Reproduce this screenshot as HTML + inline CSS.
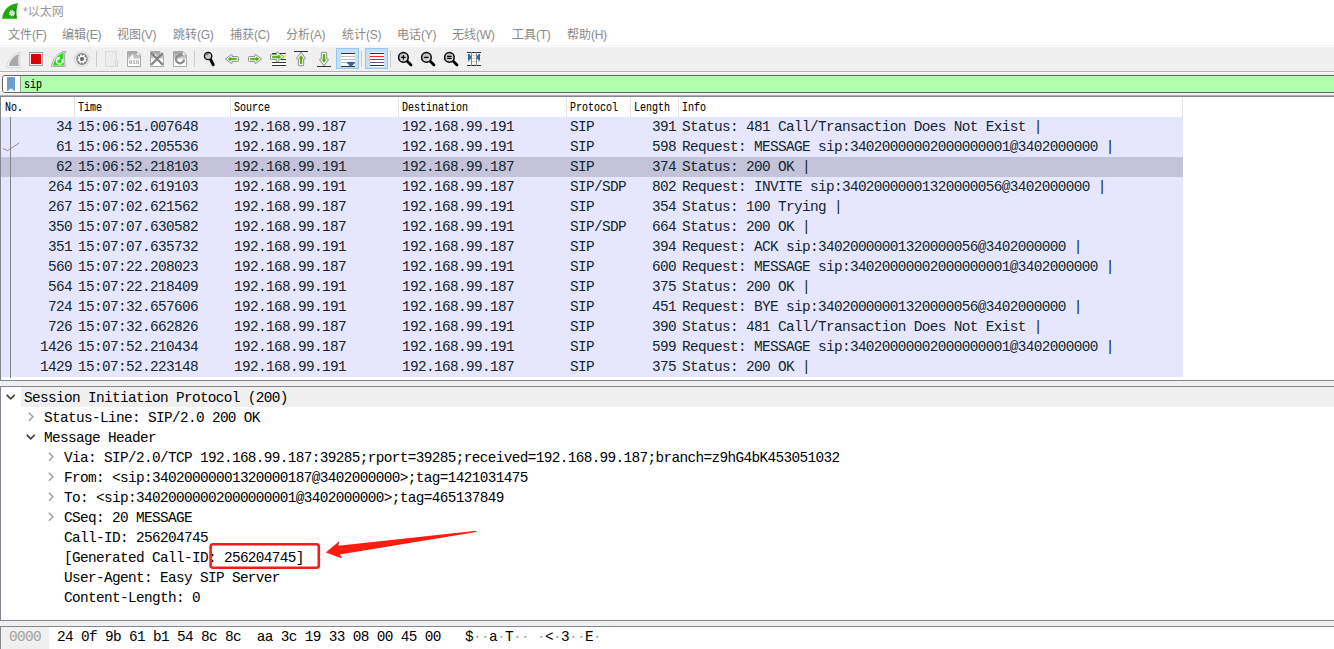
<!DOCTYPE html>
<html lang="zh-CN"><head><meta charset="utf-8"><title>*以太网</title>
<style>
html,body{margin:0;padding:0}
body{width:1334px;height:649px;position:relative;overflow:hidden;background:#fff;font-family:"Liberation Sans","Noto Sans CJK SC",sans-serif}
.a{position:absolute}
.t{position:absolute;white-space:pre}
#title{left:23px;top:3px;height:18px;line-height:18px;font-size:12px;color:#9a9a9a}
.ml{letter-spacing:-0.3px}
.m{position:absolute;top:26px;height:18px;line-height:18px;font-size:12px;color:#8a8a8a;white-space:pre}
#tbl{left:0;top:45px;width:1334px;height:1px;background:#f5f5f5}
#tb{left:0;top:47px;width:1334px;height:24px;background:#f0f0f0;border-bottom:1px solid #b2b2b2}
#fb{left:0;top:73px;width:1334px;height:22px;background:#f0f0f0;border-bottom:1px solid #b0b0b0}
#filter{left:2px;top:75px;width:1340px;height:16px;border:1px solid #646464;border-radius:3px;background:#fff;overflow:hidden}
#fg{left:18px;top:0;width:1330px;height:16px;background:#afffaf}
#bm{left:0;top:0;width:17px;height:16px;background:#fff;border-right:1px solid #9a9a9a}
#ftxt{left:21px;top:0px;height:16px;line-height:18px;font:12px/18px "Liberation Mono",monospace;color:#000;transform:scaleX(0.8332);transform-origin:0 50%;-webkit-text-stroke:0.1px #000}
#plist{left:0;top:96px;width:1334px;height:285px;border-top:1px solid #828790;border-left:1px solid #828790;border-bottom:1px solid #828790;box-sizing:border-box;background:#fff}
.h{position:absolute;top:99px;height:18px;line-height:18px;font:12px/18px "Liberation Mono",monospace;color:#000;white-space:pre;transform:scaleX(0.8332);transform-origin:0 50%;-webkit-text-stroke:0.1px #000}
.hs{position:absolute;top:97px;width:1px;height:20px;background:#e2e2e2}
.r{position:absolute;left:1px;width:1182px;height:20px;background:#e7e6ff;color:#12272e;font:14.4px/20px "Liberation Mono",monospace;letter-spacing:-0.6414px}
.r.sel{background:#c4c3d9}
.r span{position:absolute;top:0;height:20px;line-height:20px;white-space:pre}
.r .n{right:1111px}
.r .l{right:507px}
#split1{left:0;top:381px;width:1334px;height:5px;background:#f0f0f0}
#det{left:0;top:386px;width:1334px;height:235px;border-top:1px solid #828790;border-left:1px solid #828790;border-bottom:1px solid #828790;box-sizing:border-box;background:#fff}
.d{position:absolute;height:20px;line-height:20px;color:#000;font:14.4px/20px "Liberation Mono",monospace;letter-spacing:-0.6414px;white-space:pre}
.d span{position:relative;top:1px}
#split2{left:0;top:621px;width:1334px;height:5px;background:#f0f0f0}
#hex{left:0;top:626px;width:1334px;height:23px;border-top:1px solid #828790;border-left:1px solid #828790;box-sizing:border-box;background:#fff}
.x{position:absolute;top:627px;height:22px;line-height:22px;font:14.4px/22px "Liberation Mono",monospace;letter-spacing:-0.6414px;white-space:pre;color:#000}
.x span{position:relative;top:-1px}
.x i{font-style:normal;color:#a8a4ac}
svg{position:absolute;overflow:visible}
</style></head>
<body>
<!-- title bar -->
<div id="title" class="t">*以太网</div>
<!-- menu bar -->
<div class="m" style="left:8px">文件<span class="ml">(F)</span></div>
<div class="m" style="left:62px">编辑<span class="ml">(E)</span></div>
<div class="m" style="left:117px">视图<span class="ml">(V)</span></div>
<div class="m" style="left:173px">跳转<span class="ml">(G)</span></div>
<div class="m" style="left:230px">捕获<span class="ml">(C)</span></div>
<div class="m" style="left:286px">分析<span class="ml">(A)</span></div>
<div class="m" style="left:342px">统计<span class="ml">(S)</span></div>
<div class="m" style="left:397px">电话<span class="ml">(Y)</span></div>
<div class="m" style="left:452px">无线<span class="ml">(W)</span></div>
<div class="m" style="left:512px">工具<span class="ml">(T)</span></div>
<div class="m" style="left:567px">帮助<span class="ml">(H)</span></div>
<!-- toolbar -->
<div id="tbl" class="a"></div><div id="tb" class="a"></div>
<!-- filter -->
<div id="fb" class="a"></div><div id="filter" class="a"><div id="fg" class="a"></div><div id="bm" class="a"></div><div id="ftxt" class="t">sip</div></div>
<!-- packet list -->
<div id="plist" class="a"></div>
<div class="h" style="left:5px">No.</div>
<div class="h" style="left:78px">Time</div>
<div class="h" style="left:234px">Source</div>
<div class="h" style="left:402px">Destination</div>
<div class="h" style="left:570px">Protocol</div>
<div class="h" style="left:634px">Length</div>
<div class="h" style="left:682px">Info</div>
<div class="hs" style="left:74px"></div>
<div class="hs" style="left:230px"></div>
<div class="hs" style="left:398px"></div>
<div class="hs" style="left:566px"></div>
<div class="hs" style="left:630px"></div>
<div class="hs" style="left:678px"></div>
<div class="hs" style="left:1182px"></div>
<div class="r" style="top:117px"><span class="n">34</span><span style="left:77px">15:06:51.007648</span><span style="left:233px">192.168.99.187</span><span style="left:401px">192.168.99.191</span><span style="left:569px">SIP</span><span class="l">391</span><span style="left:681px">Status: 481 Call/Transaction Does Not Exist |</span></div>
<div class="r" style="top:137px"><span class="n">61</span><span style="left:77px">15:06:52.205536</span><span style="left:233px">192.168.99.187</span><span style="left:401px">192.168.99.191</span><span style="left:569px">SIP</span><span class="l">598</span><span style="left:681px">Request: MESSAGE sip:34020000002000000001@3402000000 |</span></div>
<div class="r sel" style="top:157px"><span class="n">62</span><span style="left:77px">15:06:52.218103</span><span style="left:233px">192.168.99.191</span><span style="left:401px">192.168.99.187</span><span style="left:569px">SIP</span><span class="l">374</span><span style="left:681px">Status: 200 OK |</span></div>
<div class="r" style="top:177px"><span class="n">264</span><span style="left:77px">15:07:02.619103</span><span style="left:233px">192.168.99.191</span><span style="left:401px">192.168.99.187</span><span style="left:569px">SIP/SDP</span><span class="l">802</span><span style="left:681px">Request: INVITE sip:34020000001320000056@3402000000 |</span></div>
<div class="r" style="top:197px"><span class="n">267</span><span style="left:77px">15:07:02.621562</span><span style="left:233px">192.168.99.187</span><span style="left:401px">192.168.99.191</span><span style="left:569px">SIP</span><span class="l">354</span><span style="left:681px">Status: 100 Trying |</span></div>
<div class="r" style="top:217px"><span class="n">350</span><span style="left:77px">15:07:07.630582</span><span style="left:233px">192.168.99.187</span><span style="left:401px">192.168.99.191</span><span style="left:569px">SIP/SDP</span><span class="l">664</span><span style="left:681px">Status: 200 OK |</span></div>
<div class="r" style="top:237px"><span class="n">351</span><span style="left:77px">15:07:07.635732</span><span style="left:233px">192.168.99.191</span><span style="left:401px">192.168.99.187</span><span style="left:569px">SIP</span><span class="l">394</span><span style="left:681px">Request: ACK sip:34020000001320000056@3402000000 |</span></div>
<div class="r" style="top:257px"><span class="n">560</span><span style="left:77px">15:07:22.208023</span><span style="left:233px">192.168.99.187</span><span style="left:401px">192.168.99.191</span><span style="left:569px">SIP</span><span class="l">600</span><span style="left:681px">Request: MESSAGE sip:34020000002000000001@3402000000 |</span></div>
<div class="r" style="top:277px"><span class="n">564</span><span style="left:77px">15:07:22.218409</span><span style="left:233px">192.168.99.191</span><span style="left:401px">192.168.99.187</span><span style="left:569px">SIP</span><span class="l">375</span><span style="left:681px">Status: 200 OK |</span></div>
<div class="r" style="top:297px"><span class="n">724</span><span style="left:77px">15:07:32.657606</span><span style="left:233px">192.168.99.191</span><span style="left:401px">192.168.99.187</span><span style="left:569px">SIP</span><span class="l">451</span><span style="left:681px">Request: BYE sip:34020000001320000056@3402000000 |</span></div>
<div class="r" style="top:317px"><span class="n">726</span><span style="left:77px">15:07:32.662826</span><span style="left:233px">192.168.99.187</span><span style="left:401px">192.168.99.191</span><span style="left:569px">SIP</span><span class="l">390</span><span style="left:681px">Status: 481 Call/Transaction Does Not Exist |</span></div>
<div class="r" style="top:337px"><span class="n">1426</span><span style="left:77px">15:07:52.210434</span><span style="left:233px">192.168.99.187</span><span style="left:401px">192.168.99.191</span><span style="left:569px">SIP</span><span class="l">599</span><span style="left:681px">Request: MESSAGE sip:34020000002000000001@3402000000 |</span></div>
<div class="r" style="top:357px"><span class="n">1429</span><span style="left:77px">15:07:52.223148</span><span style="left:233px">192.168.99.191</span><span style="left:401px">192.168.99.187</span><span style="left:569px">SIP</span><span class="l">375</span><span style="left:681px">Status: 200 OK |</span></div>
<div class="a" style="left:10px;top:117px;width:1px;height:261px;background:#7e868b"></div>
<div id="split1" class="a"></div>
<!-- details -->
<div id="det" class="a"></div>
<div class="a" style="left:21px;top:387px;width:1313px;height:20px;background:#f0f0f0"></div>
<div class="d" style="left:24px;top:387px"><span>Session Initiation Protocol (200)</span></div>
<div class="d" style="left:44px;top:407px"><span>Status-Line: SIP/2.0 200 OK</span></div>
<div class="d" style="left:44px;top:427px"><span>Message Header</span></div>
<div class="d" style="left:64px;top:447px"><span>Via: SIP/2.0/TCP 192.168.99.187:39285;rport=39285;received=192.168.99.187;branch=z9hG4bK453051032</span></div>
<div class="d" style="left:64px;top:467px"><span>From: &lt;sip:34020000001320000187@3402000000&gt;;tag=1421031475</span></div>
<div class="d" style="left:64px;top:487px"><span>To: &lt;sip:34020000002000000001@3402000000&gt;;tag=465137849</span></div>
<div class="d" style="left:64px;top:507px"><span>CSeq: 20 MESSAGE</span></div>
<div class="d" style="left:64px;top:527px"><span>Call-ID: 256204745</span></div>
<div class="d" style="left:64px;top:547px"><span>[Generated Call-ID: 256204745]</span></div>
<div class="d" style="left:64px;top:567px"><span>User-Agent: Easy SIP Server</span></div>
<div class="d" style="left:64px;top:587px"><span>Content-Length: 0</span></div>
<div id="split2" class="a"></div>
<!-- hex -->
<div id="hex" class="a"></div>
<div class="a" style="left:1px;top:627px;width:48px;height:22px;background:#f0f0f0"></div>
<div class="x" style="left:9px;color:#a0a0a0"><span>0000</span></div>
<div class="x" style="left:57px"><span>24 0f 9b 61 b1 54 8c 8c  aa 3c 19 33 08 00 45 00</span></div>
<div class="x" style="left:465px"><span>$<i>··</i>a<i>·</i>T<i>··</i> <i>·</i>&lt;<i>·</i>3<i>··</i>E<i>·</i></span></div>
<svg class="a" style="left:2px;top:3px" width="16" height="16" viewBox="0 0 16 16"><path d="M15.6,0.2 C8.6,0.6 0.8,6 0.1,15.9 H15 C13.8,10.5 14.2,5 15.9,0.8 Z" fill="#22a806"/><path d="M0.3,14.9 H14.8 L15,15.9 H0.1 Z" fill="#63c052"/><path d="M12,6 C11.6,9 11.9,12.6 12.6,14.9 H14.8 C14,10.5 14.2,6 15.2,2.5 Z" fill="#158403" opacity=".55"/><circle cx="9.9" cy="10.2" r="2.2" fill="#eaf6e7"/><circle cx="9.9" cy="10.2" r="2.6" fill="none" stroke="#eaf6e7" stroke-width="1.2" stroke-dasharray="1.1 0.94"/><circle cx="9.9" cy="10.2" r="0.7" fill="#86cb7b"/></svg>
<div class="a" style="left:336px;top:48px;width:21px;height:19px;background:#c5dff5;border:1px solid #92c9f7"></div>
<div class="a" style="left:365px;top:48px;width:21px;height:19px;background:#c5dff5;border:1px solid #92c9f7"></div>
<div class="a" style="left:96px;top:51px;width:1px;height:16px;background:#cdcdcd"></div>
<div class="a" style="left:194px;top:51px;width:1px;height:16px;background:#cdcdcd"></div>
<div class="a" style="left:361px;top:51px;width:1px;height:16px;background:#cdcdcd"></div>
<div class="a" style="left:390px;top:51px;width:1px;height:16px;background:#cdcdcd"></div>
<svg class="a" style="left:6px;top:52px" width="16" height="16" viewBox="0 0 16 16"><path d="M11.6,0.5 H15.7 M13.4,0.6 C7.4,1.6 1.6,7.4 0.4,15.4 H14.5 C13.4,10 13.4,5 14.3,0.6" fill="#f7f7f7" stroke="#d6d6d6" stroke-width="1"/><path d="M13,1.9 C8.2,3.2 4,7.6 2.8,13.9 H12.9 C12.1,10 12.2,5.6 13,1.9 Z" fill="#a9a9a9"/></svg>
<svg class="a" style="left:29px;top:52px" width="14" height="14" viewBox="0 0 14 14"><rect x="0.5" y="0.5" width="13" height="13" fill="#fbe3e3" stroke="#a0a4a6"/><rect x="2" y="2" width="10" height="10" rx="0.6" fill="#dc0000"/></svg>
<svg class="a" style="left:51px;top:51px" width="16" height="16" viewBox="0 0 16 16"><path d="M11,0.6 H15.6 M13.2,0.7 C7.2,1.8 1.6,7.4 0.5,15.4 H14.4 C13.3,10 13.3,5 14.1,0.7" fill="#f4f4f4" stroke="#a6a6a6" stroke-width="1"/><path d="M12.8,1.7 C7.8,3 3.4,7.6 2.1,14.4 H13 C12.1,10 12.1,5.6 12.8,1.7 Z" fill="#20dc0c"/><path d="M10.9,8.2 A3,3 0 1 1 7,7.4" fill="none" stroke="#fff" stroke-width="1.6"/><path d="M5.4,6.2 L9.4,5.8 L8,9.4 Z" fill="#fff"/></svg>
<svg class="a" style="left:74px;top:51px" width="16" height="16" viewBox="0 0 16 16"><circle cx="8" cy="8" r="7.3" fill="#fff" stroke="#c6c6c6" stroke-width="0.9"/><circle cx="8" cy="8" r="5.9" fill="#7f7f7f"/><circle cx="8" cy="8" r="3.5" fill="#fff"/><circle cx="8" cy="8" r="3.9" fill="none" stroke="#fff" stroke-width="1.5" stroke-dasharray="1.6 1.463" transform="rotate(12 8 8)"/><rect x="6.1" y="6.1" width="3.8" height="3.8" rx="1.3" fill="#686868"/></svg>
<svg class="a" style="left:105px;top:51px" width="13" height="16" viewBox="0 0 13 16"><rect x="0.5" y="0.5" width="11" height="15" fill="#ececec" stroke="#dadada"/><rect x="10.5" y="9.5" width="2" height="6" fill="#eee" stroke="#d6d6d6"/><path d="M2.5,2 V6.5 M4,2.3 H7" stroke="#f6f6f6" stroke-width="1" fill="none"/></svg>
<svg class="a" style="left:127px;top:51px;will-change:transform" width="14" height="16" viewBox="0 0 14 16"><defs><linearGradient id="fg127" x1="0" y1="0" x2="0" y2="1"><stop offset="0" stop-color="#a6a6a6"/><stop offset="1" stop-color="#cfcfcf"/></linearGradient></defs><path d="M0.5,0.5 H10 L13.5,4 V15.5 H0.5 Z" fill="#fff" stroke="#a9a9a9"/><path d="M1,1 H9.8 L13,4.2 V7.8 H1 Z" fill="url(#fg127)"/><path d="M10,1.6 L12.4,4 H10 Z" fill="#f4f4f4"/><path d="M2.8,7.8 C3.6,5.6 4.8,4 6.3,3.1 C6,4.6 6.1,6.4 6.5,7.8 Z" fill="#fff"/><text x="7.1" y="13" font-family="Liberation Mono,monospace" font-size="6" font-weight="bold" text-anchor="middle" fill="#a2a2a2" letter-spacing="-0.1">010</text></svg>
<svg class="a" style="left:150px;top:51px;will-change:transform" width="14" height="16" viewBox="0 0 14 16"><defs><linearGradient id="fg150" x1="0" y1="0" x2="0" y2="1"><stop offset="0" stop-color="#a6a6a6"/><stop offset="1" stop-color="#cfcfcf"/></linearGradient></defs><path d="M0.5,0.5 H10 L13.5,4 V15.5 H0.5 Z" fill="#fff" stroke="#a9a9a9"/><path d="M1,1 H9.8 L13,4.2 V7.8 H1 Z" fill="url(#fg150)"/><path d="M10,1.6 L12.4,4 H10 Z" fill="#f4f4f4"/><path d="M2.8,7.8 C3.6,5.6 4.8,4 6.3,3.1 C6,4.6 6.1,6.4 6.5,7.8 Z" fill="#fff"/><path d="M1.8,2.8 L12.2,13.2 M12.2,2.8 L1.8,13.2" stroke="#808080" stroke-width="2.1" stroke-linecap="round" fill="none"/></svg>
<svg class="a" style="left:173px;top:51px;will-change:transform" width="14" height="16" viewBox="0 0 14 16"><defs><linearGradient id="fg173" x1="0" y1="0" x2="0" y2="1"><stop offset="0" stop-color="#a6a6a6"/><stop offset="1" stop-color="#cfcfcf"/></linearGradient></defs><path d="M0.5,0.5 H10 L13.5,4 V15.5 H0.5 Z" fill="#fff" stroke="#a9a9a9"/><path d="M1,1 H9.8 L13,4.2 V7.8 H1 Z" fill="url(#fg173)"/><path d="M10,1.6 L12.4,4 H10 Z" fill="#f4f4f4"/><path d="M11,8.4 A4,4 0 1 1 7.6,4.3" fill="none" stroke="#8e8e8e" stroke-width="2.3"/><path d="M6.6,1.3 L10.2,4.2 L6.2,6.2 Z" fill="#8e8e8e"/></svg>
<svg class="a" style="left:202px;top:51px" width="16" height="16" viewBox="0 0 16 16"><defs><linearGradient id="mg0" x1="0" y1="0" x2="1" y2="1"><stop offset="0" stop-color="#b4b4b4"/><stop offset="1" stop-color="#dcdcdc"/></linearGradient></defs><path d="M8.7,8.8 L11.2,13.6" stroke="#000" stroke-width="3" stroke-linecap="round"/><circle cx="6.1" cy="5" r="3.7" fill="url(#mg0)" stroke="#000" stroke-width="1.3"/><path d="M4.2,4.2 A2.2,2.2 0 0 1 6.6,2.9" stroke="#222" stroke-width="0.8" fill="none"/></svg>
<svg class="a" style="left:225px;top:53px" width="14" height="12" viewBox="0 0 14 12"><g><path d="M0.4,6 L6.2,1.7 Q7.1,1.3 7.1,2.2 V3.6 H12.7 Q13.4,3.6 13.4,4.3 V7.7 Q13.4,8.4 12.7,8.4 H7.1 V9.8 Q7.1,10.7 6.2,10.3 Z" fill="#fff" stroke="#8a8a8a" stroke-width="1" stroke-linejoin="round"/><path d="M3,6 L5.8,3.9 V5.3 H11.6 V6.7 H5.8 V8.1 Z" fill="#4dab06" stroke="#4dab06" stroke-width="0.5" stroke-linejoin="round"/></g></svg>
<svg class="a" style="left:248px;top:53px" width="14" height="12" viewBox="0 0 14 12"><g transform="translate(14,0) scale(-1,1)"><path d="M0.4,6 L6.2,1.7 Q7.1,1.3 7.1,2.2 V3.6 H12.7 Q13.4,3.6 13.4,4.3 V7.7 Q13.4,8.4 12.7,8.4 H7.1 V9.8 Q7.1,10.7 6.2,10.3 Z" fill="#fff" stroke="#8a8a8a" stroke-width="1" stroke-linejoin="round"/><path d="M3,6 L5.8,3.9 V5.3 H11.6 V6.7 H5.8 V8.1 Z" fill="#4dab06" stroke="#4dab06" stroke-width="0.5" stroke-linejoin="round"/></g></svg>
<svg class="a" style="left:270px;top:51px" width="16" height="16" viewBox="0 0 16 16"><rect x="2" y="2" width="14" height="13" fill="#fff"/><rect x="2" y="2" width="14" height="1" fill="#2e3436"/><rect x="2" y="8" width="14" height="1" fill="#2e3436"/><rect x="2" y="11" width="14" height="1" fill="#2e3436"/><rect x="2" y="14" width="14" height="1" fill="#2e3436"/><rect x="12" y="4" width="4" height="3" fill="#fce94f"/><path d="M0.6,4 Q0.6,3.4 1.2,3.4 H6.6 V1.6 Q6.6,0.9 7.3,1.2 L13.4,5.5 Q13.8,5.9 13.4,6.3 L7.3,10.6 Q6.6,10.9 6.6,10.2 V8.5 H1.2 Q0.6,8.5 0.6,7.9 Z" fill="#fff" stroke="#8a8a8a" stroke-width="1" stroke-linejoin="round"/><path d="M2.4,5 H8.2 V3.7 L11,5.95 L8.2,8.2 V7 H2.4 Z" fill="#5ab51d" stroke="#5ab51d" stroke-width="0.6" stroke-linejoin="round"/></svg>
<svg class="a" style="left:294px;top:51px" width="14" height="16" viewBox="0 0 14 16"><g><rect x="0" y="0" width="14" height="1" fill="#2e3436"/><path d="M7,1.2 L11.3,7.2 Q11.6,8 10.8,8 H9.7 V14 Q9.7,14.7 9,14.7 H5 Q4.3,14.7 4.3,14 V8 H3.2 Q2.4,8 2.7,7.2 Z" fill="#fff" stroke="#8a8a8a" stroke-width="1" stroke-linejoin="round"/><path d="M7,4.4 L9,7.2 H7.9 V12.8 H6.1 V7.2 H5 Z" fill="#4dab06" stroke="#4dab06" stroke-width="0.5" stroke-linejoin="round"/></g></svg>
<svg class="a" style="left:317px;top:51px" width="14" height="16" viewBox="0 0 14 16"><g transform="translate(0,16) scale(1,-1)"><rect x="0" y="0" width="14" height="1" fill="#2e3436"/><path d="M7,1.2 L11.3,7.2 Q11.6,8 10.8,8 H9.7 V14 Q9.7,14.7 9,14.7 H5 Q4.3,14.7 4.3,14 V8 H3.2 Q2.4,8 2.7,7.2 Z" fill="#fff" stroke="#8a8a8a" stroke-width="1" stroke-linejoin="round"/><path d="M7,4.4 L9,7.2 H7.9 V12.8 H6.1 V7.2 H5 Z" fill="#4dab06" stroke="#4dab06" stroke-width="0.5" stroke-linejoin="round"/></g></svg>
<svg class="a" style="left:341px;top:52px" width="14" height="16" viewBox="0 0 14 16"><rect x="0" y="1" width="14" height="14" fill="#fff"/><rect x="0" y="1" width="14" height="1" fill="#2e3436"/><rect x="0" y="4" width="14" height="1" fill="#babdb6"/><rect x="0" y="7" width="14" height="1" fill="#babdb6"/><rect x="0" y="10" width="14" height="1" fill="#babdb6"/><rect x="0" y="14" width="14" height="1" fill="#2e3436"/><path d="M6,10 Q10,9.4 14,10 L14,11 L10.6,14.6 H9.4 L6,11 Z" fill="#3465a4"/></svg>
<svg class="a" style="left:370px;top:52px" width="14" height="16" viewBox="0 0 14 16"><rect x="0" y="0.4" width="14" height="14.6" fill="#fff"/><rect x="0" y="1" width="14" height="1" fill="#2e3436"/><rect x="0" y="4" width="14" height="1" fill="#ef2929"/><rect x="0" y="7" width="14" height="1" fill="#3465a4"/><rect x="0" y="10" width="14" height="1" fill="#75507b"/><rect x="0" y="13" width="14" height="1" fill="#2e3436"/></svg>
<svg class="a" style="left:398px;top:52px" width="16" height="16" viewBox="0 0 16 16"><defs><linearGradient id="mg1" x1="0" y1="0" x2="1" y2="1"><stop offset="0" stop-color="#b4b4b4"/><stop offset="1" stop-color="#dcdcdc"/></linearGradient></defs><path d="M9,9 L13,13" stroke="#000" stroke-width="2.8" stroke-linecap="round"/><circle cx="5.4" cy="5.4" r="4.8" fill="url(#mg1)" stroke="#000" stroke-width="1.5"/><path d="M3.2,5.4 H7.6 M5.4,3.2 V7.6" stroke="#000" stroke-width="1.2"/></svg>
<svg class="a" style="left:421px;top:52px" width="16" height="16" viewBox="0 0 16 16"><defs><linearGradient id="mg2" x1="0" y1="0" x2="1" y2="1"><stop offset="0" stop-color="#b4b4b4"/><stop offset="1" stop-color="#dcdcdc"/></linearGradient></defs><path d="M9,9 L13,13" stroke="#000" stroke-width="2.8" stroke-linecap="round"/><circle cx="5.4" cy="5.4" r="4.8" fill="url(#mg2)" stroke="#000" stroke-width="1.5"/><path d="M3.2,5.4 H7.6" stroke="#000" stroke-width="1.3"/></svg>
<svg class="a" style="left:444px;top:52px" width="16" height="16" viewBox="0 0 16 16"><defs><linearGradient id="mg3" x1="0" y1="0" x2="1" y2="1"><stop offset="0" stop-color="#b4b4b4"/><stop offset="1" stop-color="#dcdcdc"/></linearGradient></defs><path d="M9,9 L13,13" stroke="#000" stroke-width="2.8" stroke-linecap="round"/><circle cx="5.4" cy="5.4" r="4.8" fill="url(#mg3)" stroke="#000" stroke-width="1.5"/><path d="M3.2,4.4 H7.6 M3.2,6.4 H7.6" stroke="#000" stroke-width="1.1"/></svg>
<svg class="a" style="left:467px;top:52px" width="14" height="14" viewBox="0 0 14 14"><rect x="0" y="0" width="14" height="14" fill="#f6f6f4"/><rect x="0" y="3" width="14" height="1" fill="#d3d7cf"/><rect x="0" y="6" width="14" height="1" fill="#d3d7cf"/><rect x="0" y="9" width="14" height="1" fill="#d3d7cf"/><rect x="0" y="0" width="14" height="1" fill="#2e3436"/><rect x="0" y="13" width="14" height="1" fill="#2e3436"/><rect x="4" y="0" width="1" height="14" fill="#888a85"/><rect x="9" y="0" width="1" height="14" fill="#888a85"/><path d="M1,2 H2.4 L4.6,5.2 L2.4,8.6 H1 Z" fill="#3465a4"/><path d="M13,2 H11.6 L9.4,5.2 L11.6,8.6 H13 Z" fill="#3465a4"/></svg>
<svg class="a" style="left:7px;top:77px" width="8" height="14" viewBox="0 0 8 14"><path d="M0,0.6 Q0,0 0.6,0 H7.4 Q8,0 8,0.6 V13.6 Q8,14.1 7.5,13.9 L4,11.2 L0.5,13.9 Q0,14.1 0,13.6 Z" fill="#6e9dd2"/></svg>
<svg class="a" style="left:0px;top:137px" width="24" height="20" viewBox="0 0 24 20"><path d="M3,11.5 L7.5,13.6 L19,6.2" fill="none" stroke="#8a8a96" stroke-width="1"/></svg>
<svg class="a" style="left:6px;top:394px" width="10" height="7" viewBox="0 0 10 7"><path d="M0.7,0.9 L4.7,4.9 L8.7,0.9" fill="none" stroke="#404040" stroke-width="1.6"/></svg>
<svg class="a" style="left:27.5px;top:412px" width="7" height="10" viewBox="0 0 7 10"><path d="M0.9,0.8 L4.9,4.8 L0.9,8.8" fill="none" stroke="#a0a0a0" stroke-width="1.5"/></svg>
<svg class="a" style="left:26px;top:434px" width="10" height="7" viewBox="0 0 10 7"><path d="M0.7,0.9 L4.7,4.9 L8.7,0.9" fill="none" stroke="#404040" stroke-width="1.6"/></svg>
<svg class="a" style="left:47.5px;top:452px" width="7" height="10" viewBox="0 0 7 10"><path d="M0.9,0.8 L4.9,4.8 L0.9,8.8" fill="none" stroke="#a0a0a0" stroke-width="1.5"/></svg>
<svg class="a" style="left:47.5px;top:472px" width="7" height="10" viewBox="0 0 7 10"><path d="M0.9,0.8 L4.9,4.8 L0.9,8.8" fill="none" stroke="#a0a0a0" stroke-width="1.5"/></svg>
<svg class="a" style="left:47.5px;top:492px" width="7" height="10" viewBox="0 0 7 10"><path d="M0.9,0.8 L4.9,4.8 L0.9,8.8" fill="none" stroke="#a0a0a0" stroke-width="1.5"/></svg>
<svg class="a" style="left:47.5px;top:512px" width="7" height="10" viewBox="0 0 7 10"><path d="M0.9,0.8 L4.9,4.8 L0.9,8.8" fill="none" stroke="#a0a0a0" stroke-width="1.5"/></svg>
<svg class="a" style="left:0px;top:0px" width="1334" height="649" viewBox="0 0 1334 649"><rect x="210.6" y="544.3" width="108.2" height="23.4" rx="2.5" fill="none" stroke="#fb1b1b" stroke-width="2.6"/><path d="M476.3,530.8 L338.2,545.8 L339.4,541 L325.8,552.4 L342.2,558.4 L339.8,554.6 L476.4,532 Z" fill="#fd1d10"/></svg>
</body></html>
